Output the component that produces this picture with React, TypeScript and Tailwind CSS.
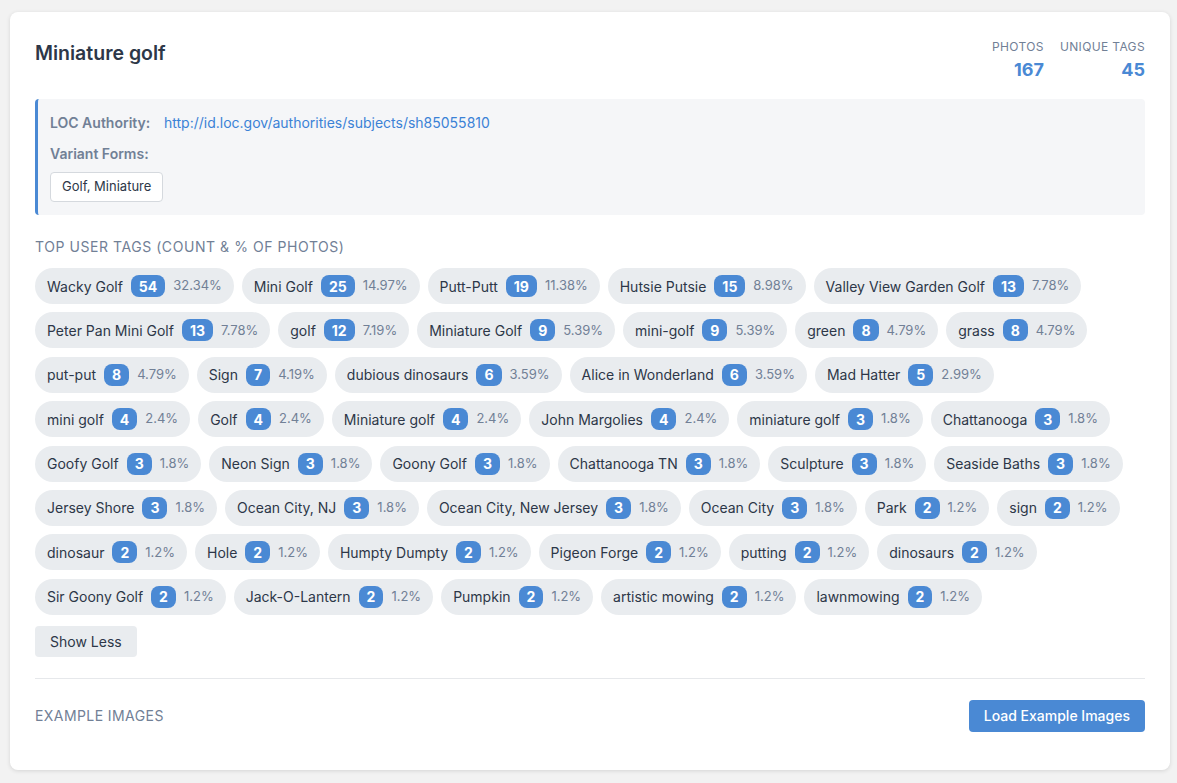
import React from "react";

type Tag = [string, number, string];

const tags: Tag[] = [
  ["Wacky Golf", 54, "32.34%"],
  ["Mini Golf", 25, "14.97%"],
  ["Putt-Putt", 19, "11.38%"],
  ["Hutsie Putsie", 15, "8.98%"],
  ["Valley View Garden Golf", 13, "7.78%"],
  ["Peter Pan Mini Golf", 13, "7.78%"],
  ["golf", 12, "7.19%"],
  ["Miniature Golf", 9, "5.39%"],
  ["mini-golf", 9, "5.39%"],
  ["green", 8, "4.79%"],
  ["grass", 8, "4.79%"],
  ["put-put", 8, "4.79%"],
  ["Sign", 7, "4.19%"],
  ["dubious dinosaurs", 6, "3.59%"],
  ["Alice in Wonderland", 6, "3.59%"],
  ["Mad Hatter", 5, "2.99%"],
  ["mini golf", 4, "2.4%"],
  ["Golf", 4, "2.4%"],
  ["Miniature golf", 4, "2.4%"],
  ["John Margolies", 4, "2.4%"],
  ["miniature golf", 3, "1.8%"],
  ["Chattanooga", 3, "1.8%"],
  ["Goofy Golf", 3, "1.8%"],
  ["Neon Sign", 3, "1.8%"],
  ["Goony Golf", 3, "1.8%"],
  ["Chattanooga TN", 3, "1.8%"],
  ["Sculpture", 3, "1.8%"],
  ["Seaside Baths", 3, "1.8%"],
  ["Jersey Shore", 3, "1.8%"],
  ["Ocean City, NJ", 3, "1.8%"],
  ["Ocean City, New Jersey", 3, "1.8%"],
  ["Ocean City", 3, "1.8%"],
  ["Park", 2, "1.2%"],
  ["sign", 2, "1.2%"],
  ["dinosaur", 2, "1.2%"],
  ["Hole", 2, "1.2%"],
  ["Humpty Dumpty", 2, "1.2%"],
  ["Pigeon Forge", 2, "1.2%"],
  ["putting", 2, "1.2%"],
  ["dinosaurs", 2, "1.2%"],
  ["Sir Goony Golf", 2, "1.2%"],
  ["Jack-O-Lantern", 2, "1.2%"],
  ["Pumpkin", 2, "1.2%"],
  ["artistic mowing", 2, "1.2%"],
  ["lawnmowing", 2, "1.2%"],
];

export default function App() {
  return (
    <div
      className="min-h-[783px] bg-[#f2f2f2] pt-[12px] pl-[10px] pr-[7px] pb-[13px]"
      style={{ fontFamily: "Inter, 'Noto Sans', 'Liberation Sans', sans-serif" }}
    >
      <div className="bg-white rounded-[8px] shadow-[0_1px_4px_rgba(0,0,0,0.12)] px-[25px] pt-[25px] pb-[38px]">
        {/* Header */}
        <div className="flex justify-between items-start">
          <h1 className="text-[19.5px] leading-[28px] font-semibold text-[#2d3748] mt-[2px]">
            Miniature golf
          </h1>
          <div className="flex gap-[16px] text-right mt-[2px]">
            <div className="flex flex-col items-end">
              <div className="text-[12px] leading-[16px] tracking-[0.03em] text-[#718096] uppercase">
                Photos
              </div>
              <div className="text-[18px] leading-[24px] font-bold text-[#4a89d4] mt-[3px]">
                167
              </div>
            </div>
            <div className="flex flex-col items-end">
              <div className="text-[12px] leading-[16px] tracking-[0.03em] text-[#718096] uppercase">
                Unique Tags
              </div>
              <div className="text-[18px] leading-[24px] font-bold text-[#4a89d4] mt-[3px]">
                45
              </div>
            </div>
          </div>
        </div>

        {/* LOC box */}
        <div className="mt-[17px] bg-[#f5f6f8] border-l-[3px] border-[#4a89d4] rounded-[4px] px-[12px] pt-[14px] pb-[13px]">
          <div className="flex items-center text-[14px] leading-[20px]">
            <span className="font-semibold text-[#718096] w-[114px]">LOC Authority:</span>
            <a className="text-[#3b82d6]" href="#">
              http://id.loc.gov/authorities/subjects/sh85055810
            </a>
          </div>
          <div className="mt-[11px] text-[14px] leading-[20px] font-semibold text-[#718096]">
            Variant Forms:
          </div>
          <div className="mt-[8px] flex">
            <span className="bg-white border border-[#d5d9de] rounded-[4px] px-[11px] h-[30px] flex items-center text-[13px] text-[#2d3748]">
              Golf, Miniature
            </span>
          </div>
        </div>

        {/* Top user tags */}
        <div className="mt-[22px] text-[14px] leading-[20px] tracking-[0.04em] text-[#718096] uppercase">
          Top User Tags (Count &amp; % of Photos)
        </div>
        <div className="mt-[11px] flex flex-wrap gap-x-[8px] gap-y-[8.4px]">
          {tags.map(([name, count, pct]) => (
            <div
              key={name}
              className="h-[36px] bg-[#e9ecef] rounded-full pl-[12px] pr-[12px] flex items-center text-[14px] text-[#2d3748]"
            >
              <span>{name}</span>
              <span className="ml-[8px] h-[22px] min-w-[24px] px-[8px] rounded-[8px] bg-[#4a89d4] text-white text-[14px] font-bold flex items-center justify-center">
                {count}
              </span>
              <span className="ml-[8px] text-[13px] text-[#718096]">{pct}</span>
            </div>
          ))}
        </div>

        <div className="mt-[11px] flex">
          <button className="h-[31px] px-[15px] bg-[#e9ecef] rounded-[4px] text-[14px] text-[#2d3748]">
            Show Less
          </button>
        </div>

        <div className="mt-[21px] border-t border-[#e6e8eb]" />

        <div className="mt-[21px] flex items-center justify-between">
          <div className="text-[14px] tracking-[0.03em] text-[#718096] uppercase">
            Example Images
          </div>
          <button className="h-[32px] px-[15px] bg-[#4a89d4] rounded-[4px] text-[14px] text-white font-medium">
            Load Example Images
          </button>
        </div>
      </div>
    </div>
  );
}
